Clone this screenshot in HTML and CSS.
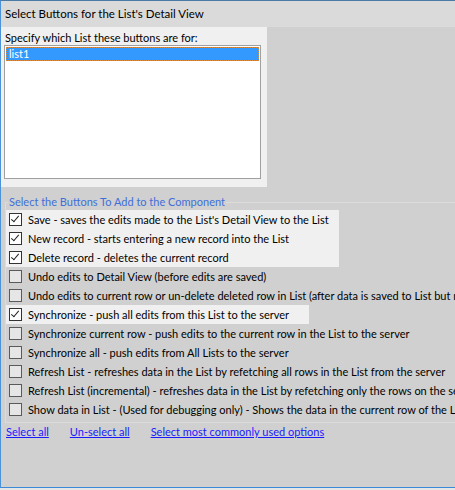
FILE: index.html
```html
<!DOCTYPE html>
<html>
<head>
<meta charset="utf-8">
<title>Select Buttons for the List's Detail View</title>
<link rel="stylesheet" href="styles.css">
</head>
<body>
<div class="window">
  <div class="titlebar">Select Buttons for the List's Detail View</div>
  <div class="list-panel">
    <div class="list-label">Specify which List these buttons are for:</div>
    <div class="listbox">
      <div class="list-item selected">list1</div>
    </div>
  </div>
  <fieldset class="group">
    <legend class="group-label">Select the Buttons To Add to the Component</legend>
    <div class="hl hl-a">
      <label class="row"><span class="cb checked"></span><span class="txt">Save - saves the edits made to the List's Detail View to the List</span></label>
      <label class="row"><span class="cb checked"></span><span class="txt">New record - starts entering a new record into the List</span></label>
      <label class="row"><span class="cb checked"></span><span class="txt">Delete record - deletes the current record</span></label>
    </div>
    <label class="row"><span class="cb"></span><span class="txt">Undo edits to Detail View (before edits are saved)</span></label>
    <label class="row"><span class="cb"></span><span class="txt">Undo edits to current row or un-delete deleted row in List (after data is saved to List but not yet to the server)</span></label>
    <div class="hl hl-b">
      <label class="row"><span class="cb checked"></span><span class="txt">Synchronize - push all edits from this List to the server</span></label>
    </div>
    <label class="row"><span class="cb"></span><span class="txt">Synchronize current row - push edits to the current row in the List to the server</span></label>
    <label class="row"><span class="cb"></span><span class="txt">Synchronize all - push edits from All Lists to the server</span></label>
    <label class="row"><span class="cb"></span><span class="txt">Refresh List - refreshes data in the List by refetching all rows in the List from the server</span></label>
    <label class="row"><span class="cb"></span><span class="txt">Refresh List (incremental) - refreshes data in the List by refetching only the rows on the server that have changed</span></label>
    <label class="row"><span class="cb"></span><span class="txt">Show data in List - (Used for debugging only) - Shows the data in the current row of the List</span></label>
  </fieldset>
  <div class="links">
    <a href="#" class="link">Select all</a>
    <a href="#" class="link">Un-select all</a>
    <a href="#" class="link">Select most commonly used options</a>
  </div>
</div>
</body>
</html>
```
FILE: styles.css
```css
html, body {
  margin: 0;
  padding: 0;
  background: #e6e6e6;
}
.window {
  width: 454px;
  height: 486px;
  background: #d0d0d0;
  border-top: 1px solid #4a7aa6;
  border-left: 1px solid #4c92d8;
  border-bottom: 1px solid #3b8bd9;
  overflow: hidden;
  font-family: Lato, "Liberation Sans", sans-serif;
  font-size: 11px;
  color: #000;
  display: flex;
  flex-direction: column;
}
.titlebar {
  height: 26px;
  line-height: 26px;
  padding-left: 4px;
  background: #dadada;
  font-size: 11.5px;
  white-space: nowrap;
}
.list-panel {
  width: 266px;
  height: 160px;
  box-sizing: border-box;
  padding: 4px 0 0 3px;
  background: #f0f0f0;
}
.list-label {
  height: 14px;
  line-height: 14px;
  padding-left: 1px;
  white-space: nowrap;
}
.listbox {
  width: 257px;
  height: 134px;
  box-sizing: border-box;
  border: 1px solid #a0a0a0;
  background: #fff;
  padding: 1px;
}
.list-item {
  height: 14px;
  line-height: 12px;
  box-sizing: border-box;
  padding-left: 2px;
}
.list-item.selected {
  background: #3399ff;
  color: #fff;
  border: 1px dotted #d8883a;
}
.group {
  margin: 8px 0 0 4px;
  padding: 1px 0 3px 0;
  width: 520px;
  border: 1px solid #dcdcdc;
  border-right: none;
  min-width: 0;
}
.group-label {
  padding: 0 1px;
  margin-left: 2px;
  height: 14px;
  line-height: 14px;
  color: #3f6fd8;
  white-space: nowrap;
}
.hl {
  background: #f0f0f0;
}
.hl-a { width: 333px; }
.hl-b { width: 303px; }
.row {
  display: flex;
  align-items: center;
  height: 19px;
  padding-left: 3px;
  white-space: nowrap;
}
.cb {
  flex: none;
  width: 13px;
  height: 13px;
  box-sizing: border-box;
  border: 1px solid #5a5a5a;
  background: #e6e6e6;
  margin-right: 6px;
  position: relative;
}
.cb.checked {
  border-color: #333;
  background: #fff;
}
.cb.checked::after {
  content: "";
  position: absolute;
  left: 3px;
  top: 0px;
  width: 3px;
  height: 7px;
  border-right: 1.2px solid #222;
  border-bottom: 1.2px solid #222;
  transform: rotate(40deg);
}
.txt {
  line-height: 19px;
}
.links {
  display: flex;
  gap: 21px;
  padding: 1px 0 0 5px;
  height: 16px;
  line-height: 16px;
}
.link {
  color: #1a1aff;
  text-decoration: underline;
  white-space: nowrap;
}
```
